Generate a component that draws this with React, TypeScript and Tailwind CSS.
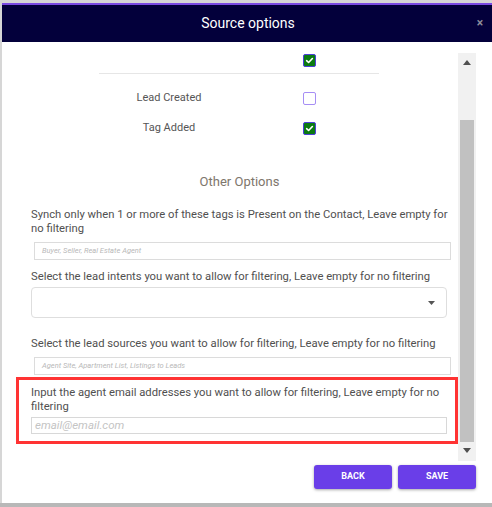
import React from "react";

function Checked() {
  return (
    <div className="w-[13px] h-[13px] rounded-[2px] border border-[#4b3fd8] bg-[#0b7a12] flex items-center justify-center">
      <svg width="9" height="9" viewBox="0 0 10 10">
        <path d="M1.8 5.2 L4 7.2 L8.2 2.8" fill="none" stroke="#ffffff" strokeWidth="1.8" strokeLinecap="round" strokeLinejoin="round" />
      </svg>
    </div>
  );
}

function Unchecked() {
  return <div className="w-[13px] h-[13px] rounded-[2px] border-[1.5px] border-[#a68ef5] bg-white" />;
}

export default function App() {
  return (
    <div
      className="w-[492px] h-[507px] bg-[#d6d6d6] pt-[3px] pl-[2px] overflow-hidden"
      style={{ fontFamily: "Roboto, 'Liberation Sans', sans-serif" }}
    >
      <div className="w-[490px] h-[500px] bg-white border-t-2 border-[#7b4ae2] flex flex-col">
        {/* header */}
        <div className="h-[37px] bg-[#03003b] flex items-center relative">
          <div className="flex-1 text-center text-white text-[14px] pl-[2px]">Source options</div>
          <div className="absolute right-[9px] top-[9px] text-[#8e8e9c] text-[12px] font-bold">×</div>
        </div>
        {/* body */}
        <div className="flex pt-[11px] pr-[16px]">
          <div className="w-[456px] h-[408px] overflow-hidden">
            {/* checkbox table */}
            <div className="ml-[97px] w-[280px]">
              <div className="flex h-[21px] pt-[1px] border-b border-[#e6e6e6]">
                <div className="w-[140px]" />
                <div className="w-[140px] flex justify-center">
                  <Checked />
                </div>
              </div>
              <div className="mt-[9px] flex h-[30px] items-center">
                <div className="w-[140px] text-center text-[11px] text-[#555]">Lead Created</div>
                <div className="w-[140px] flex justify-center">
                  <Unchecked />
                </div>
              </div>
              <div className="flex h-[30px] items-center">
                <div className="w-[140px] text-center text-[11px] text-[#555]">Tag Added</div>
                <div className="w-[140px] flex justify-center">
                  <Checked />
                </div>
              </div>
            </div>
            <div className="mt-[31px] text-center text-[13px] leading-[16px] text-[#7e766c] pl-[19px]">Other Options</div>

            <div className="pl-[29px]">
              <div className="mt-[18px] w-[422px] text-[11.25px] leading-[14px] text-[#505050]">
                Synch only when 1 or more of these tags is Present on the Contact, Leave empty for no filtering
              </div>
              <div className="mt-[6px] ml-[3px] w-[417px] h-[18px] border border-[#dcdcdc] flex items-center pl-[7px]">
                <span className="text-[7.5px] italic text-[#b8b8b8]">Buyer, Seller, Real Estate Agent</span>
              </div>

              <div className="mt-[10px] w-[422px] text-[11.25px] leading-[14px] text-[#505050]">
                Select the lead intents you want to allow for filtering, Leave empty for no filtering
              </div>
              <div className="mt-[3px] w-[416px] h-[31px] border border-[#dedede] rounded-[4px] flex items-center justify-end pr-[11px]">
                <svg width="7" height="4" viewBox="0 0 7 4">
                  <path d="M0 0 L7 0 L3.5 4 Z" fill="#555" />
                </svg>
              </div>

              <div className="mt-[19px] w-[422px] text-[11.25px] leading-[14px] text-[#505050]">
                Select the lead sources you want to allow for filtering, Leave empty for no filtering
              </div>
              <div className="mt-[6px] ml-[3px] w-[417px] h-[18px] border border-[#dcdcdc] flex items-center pl-[7px]">
                <span className="text-[7.5px] italic text-[#b8b8b8]">Agent Site, Apartment List, Listings to Leads</span>
              </div>
            </div>

            <div className="ml-[14px] mt-[2px] w-[442px] border-[3px] border-[#ff3333] pl-[12px] pt-[6px] pb-[7px]">
              <div className="w-[422px] text-[11.25px] leading-[14px] text-[#505050]">
                Input the agent email addresses you want to allow for filtering, Leave empty for no filtering
              </div>
              <div className="mt-[3px] w-[416px] h-[17px] border border-[#d8d8d8] flex items-center pl-[3px]">
                <span className="text-[11.5px] italic text-[#c4c4c4]">email@email.com</span>
              </div>
            </div>
          </div>
          {/* scrollbar */}
          <div className="w-[18px] h-[408px] bg-[#f1f1f1] flex flex-col items-center">
            <div className="h-[19px] flex items-center justify-center">
              <svg width="8" height="5" viewBox="0 0 8 5">
                <path d="M0 5 L8 5 L4 0 Z" fill="#505050" />
              </svg>
            </div>
            <div className="mt-[48px] w-[14px] h-[322px] bg-[#c1c1c1]" />
            <div className="h-[17px] flex items-center justify-center">
              <svg width="8" height="5" viewBox="0 0 8 5">
                <path d="M0 0 L8 0 L4 5 Z" fill="#505050" />
              </svg>
            </div>
          </div>
        </div>
        {/* footer */}
        <div className="mt-[4px] pr-[16px] flex justify-end gap-[6px]">
          <div className="w-[78px] h-[24px] rounded-[3px] bg-[#6a3ee8] shadow-[0_1px_3px_rgba(0,0,0,0.35)] flex items-center justify-center text-white text-[9px] font-bold">BACK</div>
          <div className="w-[78px] h-[24px] rounded-[3px] bg-[#6a3ee8] shadow-[0_1px_3px_rgba(0,0,0,0.35)] flex items-center justify-center text-white text-[9px] font-bold">SAVE</div>
        </div>
      </div>
      <div className="h-[4px] bg-[#b8b8b8] -ml-[2px]" />
    </div>
  );
}
